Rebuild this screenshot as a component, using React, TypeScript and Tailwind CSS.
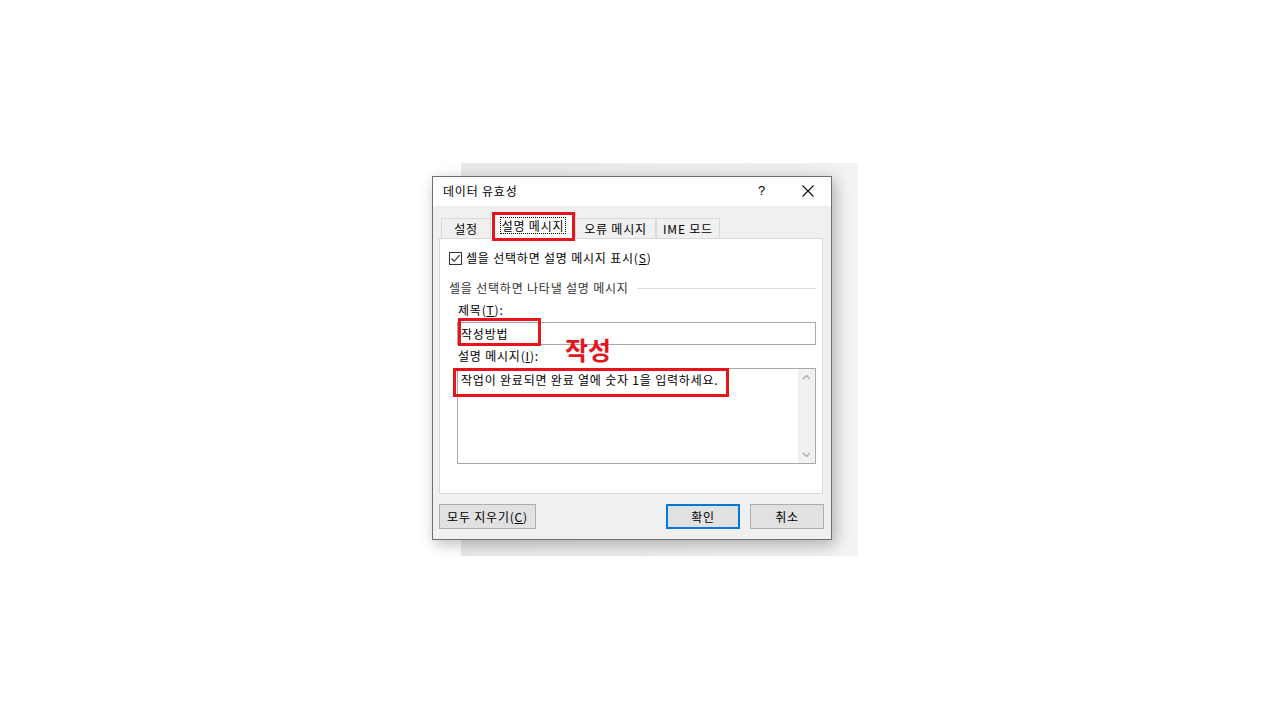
import React from 'react'

const font = "font-['Malgun_Gothic','Noto_Sans_CJK_KR',sans-serif]"

const Tab = ({ label, active }: { label: string; active?: boolean }) => {
    if (active) {
        return (
            <div className='relative -mx-[1px] z-10 flex h-[26px] items-center justify-center whitespace-nowrap border border-b-0 border-[#d9d9d9] bg-white pb-[1px]'>
                <span className='border border-dotted border-black px-[1px] leading-[15px]'>{label}</span>
                {/* annotation */}
                <div className='absolute left-[1px] -top-[1px] h-[29px] w-[83px] border-[3px] border-[#e8141b]'></div>
            </div>
        )
    }
    return (
        <div className='flex h-[20px] items-center justify-center whitespace-nowrap border border-b-0 border-[#d9d9d9] bg-[#f0f0f0]'>
            {label}
        </div>
    )
}

const App: React.FC = () => {
    return (
        <div className={`h-[720px] w-[1280px] overflow-hidden bg-white text-[12px] tracking-[0.8px] text-black ${font}`}>
            <div className='ml-[461px] mt-[163px] h-[393px] w-[397px] bg-[linear-gradient(to_right,#e9e9e9,#eeeeee_85%,#f4f4f4)] pt-[13px]'>
                <div className='-ml-[29px] flex h-[364px] w-[400px] flex-col border border-[#6e6e6e] bg-[#f0f0f0] shadow-[3px_4px_14px_rgba(0,0,0,0.28)]'>
                    {/* title bar */}
                    <div className='flex h-[29px] items-center bg-white pb-[1px] pl-[10px]'>
                        <span className='flex-1 leading-[16px]'>데이터 유효성</span>
                        <span className='w-[20px] text-center text-[13px] font-["Liberation_Sans",sans-serif]'>?</span>
                        <div className='ml-[13px] flex w-[46px] justify-center'>
                            <svg width='12' height='12' viewBox='0 0 12 12'>
                                <path d='M0.5 0.5L11.5 11.5M11.5 0.5L0.5 11.5' stroke='#111' strokeWidth='1.1' fill='none' />
                            </svg>
                        </div>
                    </div>

                    <div className='flex flex-1 flex-col pl-[6px] pr-[8px]'>
                        {/* tabs */}
                        <div className='mt-[8px] flex h-[24px] items-end pl-[2px]'>
                            <div className='flex items-end'>
                                <div className='w-[50px]'><Tab label='설정' /></div>
                                <div className='w-[84px]'><Tab label='설명 메시지' active /></div>
                                <div className='w-[81px]'><Tab label='오류 메시지' /></div>
                                <div className='w-[64px]'><Tab label='IME 모드' /></div>
                            </div>
                        </div>

                        {/* panel */}
                        <div className='relative flex h-[256px] w-[384px] flex-col border border-[#d9d9d9] bg-white pl-[9px] pr-[6px] pt-[12px]'>
                            <div className='flex h-[14px] items-center gap-[4px]'>
                                <div className='flex h-[13px] w-[13px] items-center justify-center border border-[#333]'>
                                    <svg width='11' height='11' viewBox='0 0 11 11'>
                                        <path d='M1.5 5.5L4.2 8.3L9.6 2.2' stroke='#222' strokeWidth='1.1' fill='none' />
                                    </svg>
                                </div>
                                <span className='leading-[14px]'>셀을 선택하면 설명 메시지 표시(<span className='underline'>S</span>)</span>
                            </div>

                            <div className='mt-[15px] flex h-[16px] items-center gap-[8px]'>
                                <span className='leading-[16px] text-[#333]'>셀을 선택하면 나타낼 설명 메시지</span>
                                <div className='h-[1px] flex-1 bg-[#dcdcdc]'></div>
                            </div>

                            <div className='pl-[9px]'>
                                <div className='mt-[6px] h-[16px] leading-[16px]'>제목(<span className='underline'>T</span>):</div>
                                <div className='relative mt-[4px] flex h-[23px] w-[359px] -ml-[1px] items-center border border-[#a8a8a8] bg-white pl-[3px]'>
                                    작성방법
                                    <div className='absolute left-[0px] -top-[5px] h-[28px] w-[83px] border-[3px] border-[#e8141b]'></div>
                                </div>

                                <div className='mt-[3px] h-[16px] leading-[16px]'>설명 메시지(<span className='underline'>I</span>):</div>
                                <div className='relative mt-[4px] flex h-[96px] w-[359px] -ml-[1px] border border-[#a8a8a8] bg-white'>
                                    <div className='flex-1 whitespace-nowrap pl-[3px] pt-[3px] leading-[16px]'>작업이 완료되면 완료 열에 숫자 1을 입력하세요.</div>
                                    <div className='flex w-[17px] flex-col items-center justify-between bg-[#f0f0f0] py-[5px]'>
                                        <svg width='9' height='6' viewBox='0 0 9 6'>
                                            <path d='M1 5L4.5 1.5L8 5' stroke='#a6a6a6' strokeWidth='1.2' fill='none' />
                                        </svg>
                                        <svg width='9' height='6' viewBox='0 0 9 6'>
                                            <path d='M1 1L4.5 4.5L8 1' stroke='#a6a6a6' strokeWidth='1.2' fill='none' />
                                        </svg>
                                    </div>
                                    <div className='absolute -left-[5px] -top-[1px] h-[29px] w-[276px] border-[3px] border-[#e8141b]'></div>
                                </div>
                            </div>

                            {/* annotation text */}
                            <div className='absolute left-[125px] top-[95px] text-[25px] font-bold leading-[30px] tracking-[0px] text-[#e8141b]'>작성</div>
                        </div>

                        {/* buttons */}
                        <div className='mt-[10px] flex items-center'>
                            <div className='flex h-[25px] w-[97px] items-center justify-center whitespace-nowrap border border-[#adadad] bg-[#e1e1e1]'>
                                모두 지우기(<span className='underline'>C</span>)
                            </div>
                            <div className='flex-1'></div>
                            <div className='flex h-[25px] w-[74px] items-center justify-center border-2 border-[#0078d7] bg-[#e1e1e1]'>
                                확인
                            </div>
                            <div className='ml-[10px] -mr-[1px] flex h-[25px] w-[74px] items-center justify-center border border-[#adadad] bg-[#e1e1e1]'>
                                취소
                            </div>
                        </div>
                    </div>
                </div>
            </div>
        </div>
    )
}

export default App
